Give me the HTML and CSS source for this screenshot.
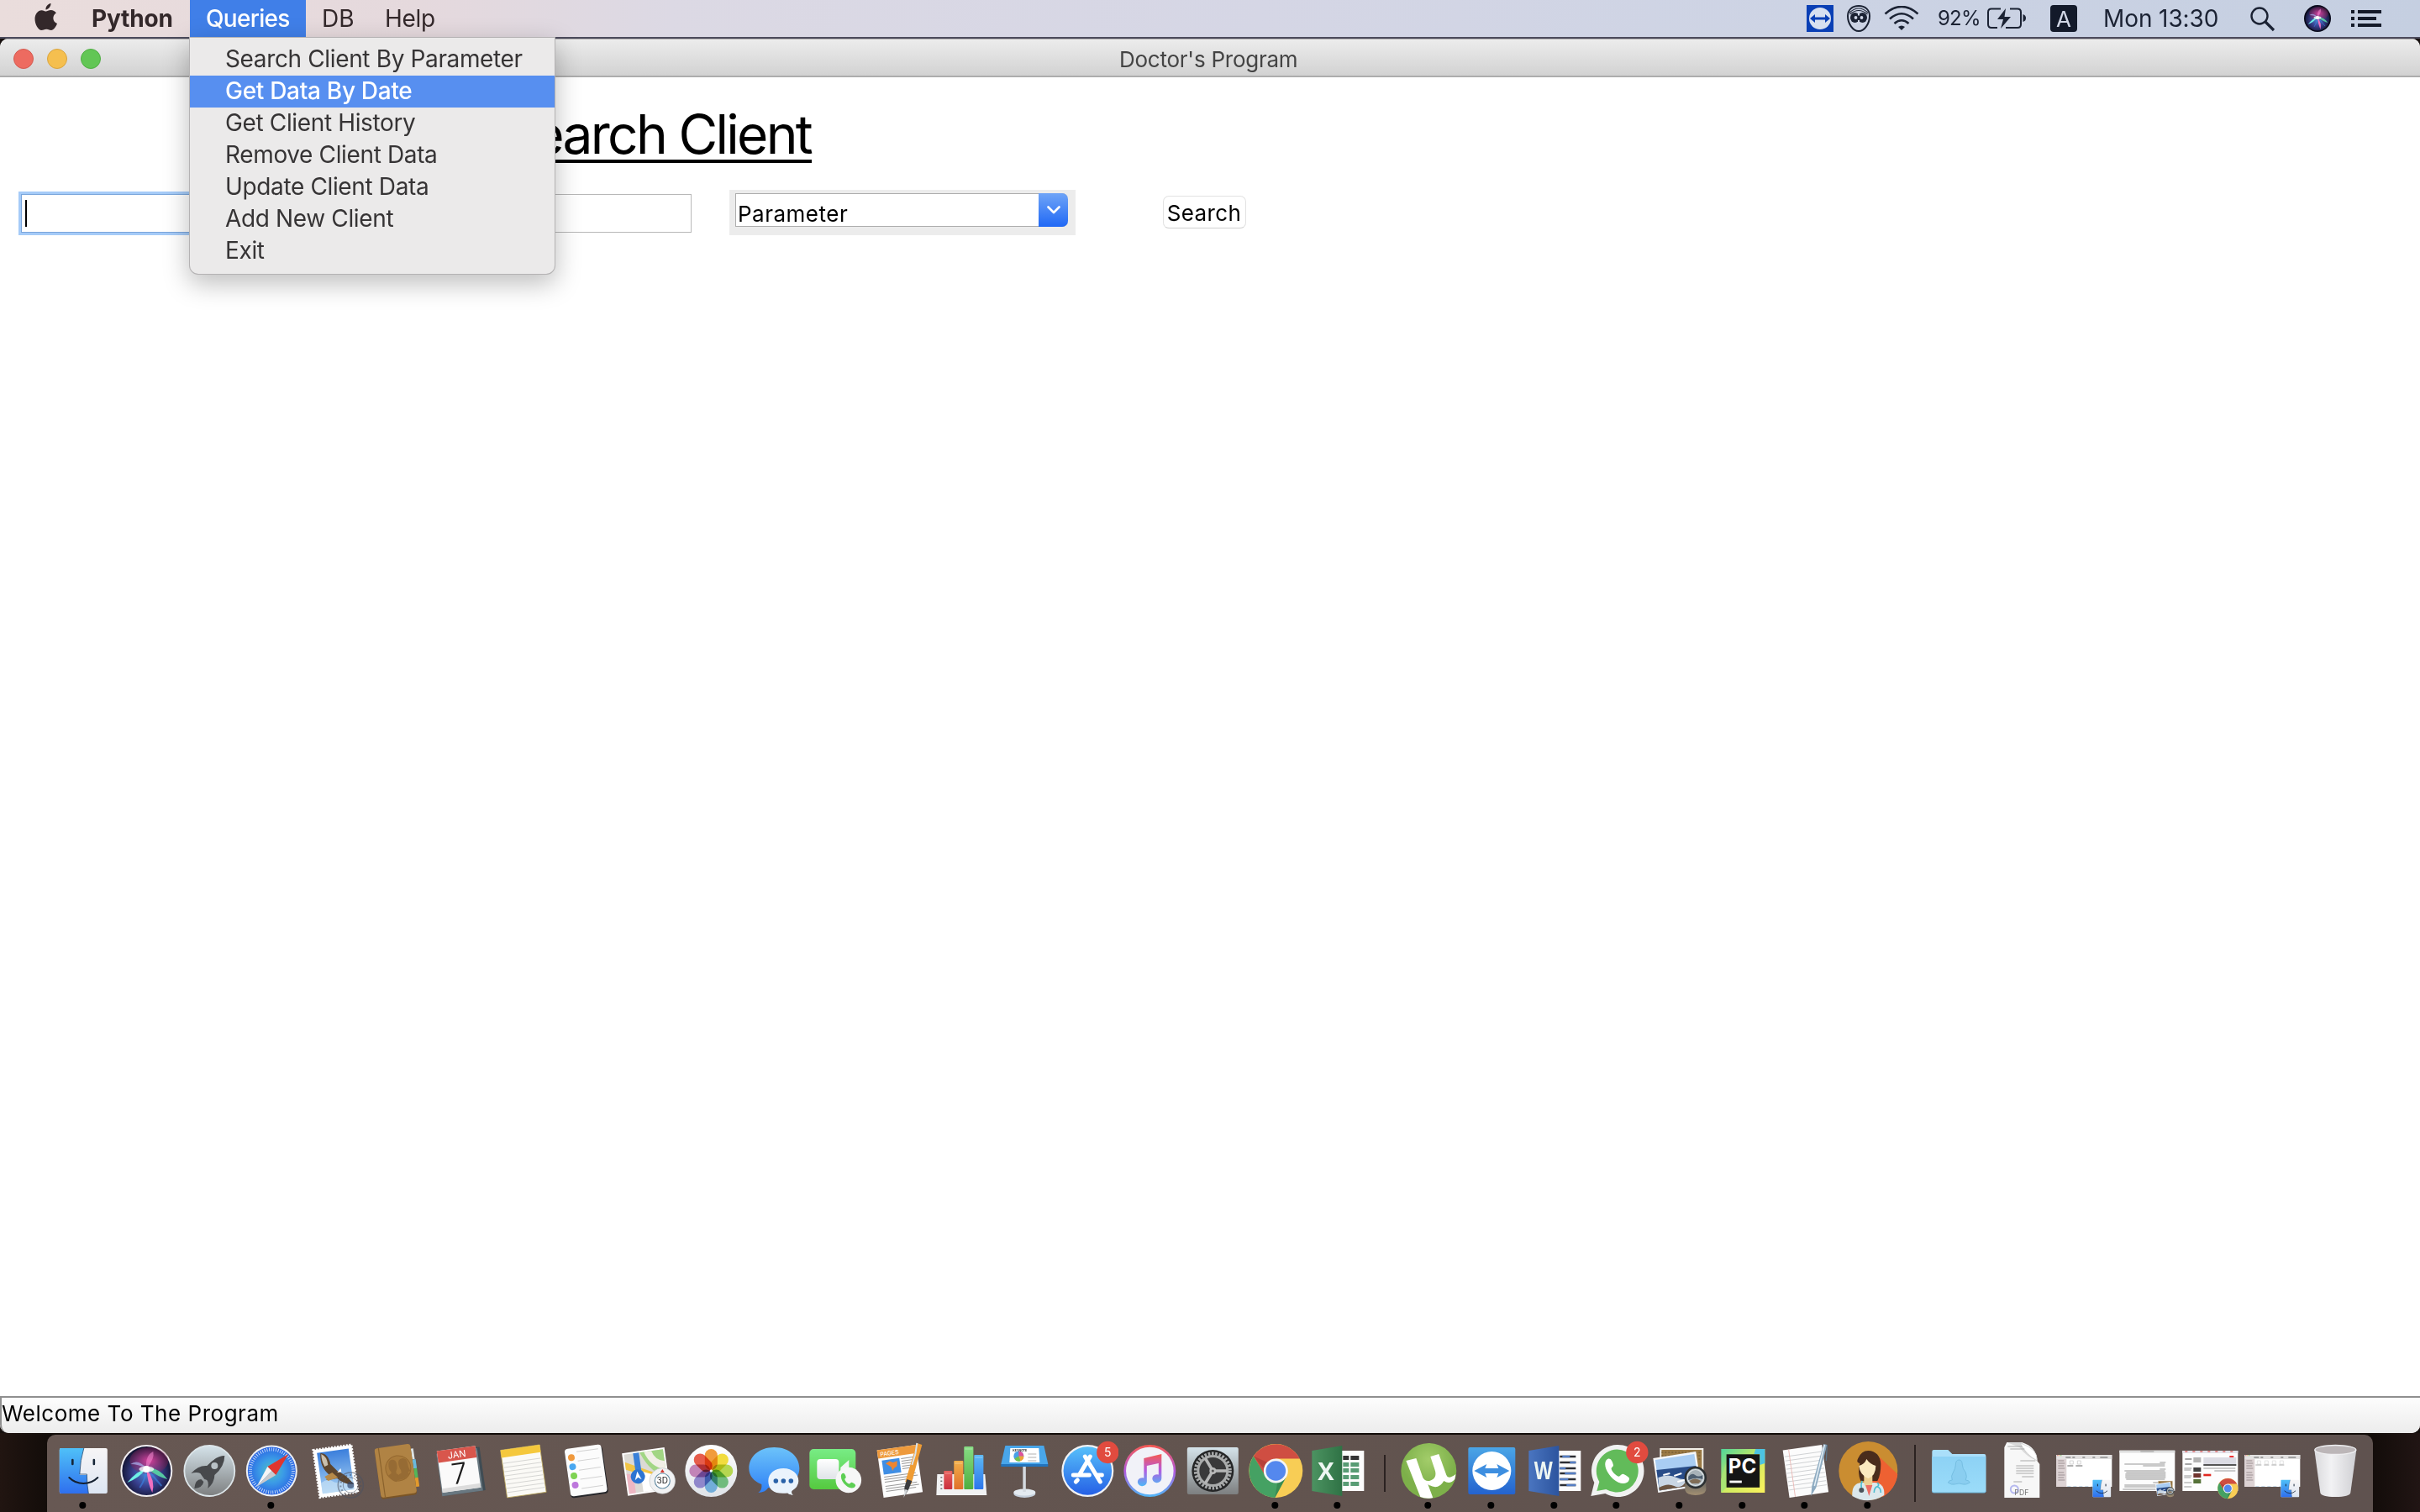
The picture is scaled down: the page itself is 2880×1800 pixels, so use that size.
FILE: index.html
```html
<!DOCTYPE html>
<html lang="en">
<head>
<meta charset="utf-8">
<title>Doctor's Program</title>
<link rel="stylesheet" href="styles.css">
</head>
<body>
<svg class="defs" width="0" height="0" aria-hidden="true">
  <defs>
    <linearGradient id="gBlueV" x2="0" y2="1"><stop stop-color="#4fc0f8"/><stop offset="1" stop-color="#2f6fee"/></linearGradient>
    <linearGradient id="gFace" x2="0" y2="1"><stop stop-color="#f7f5f6"/><stop offset="1" stop-color="#dde6f3"/></linearGradient>
    <linearGradient id="gSilver" x2="0" y2="1"><stop stop-color="#d5e3ea"/><stop offset="1" stop-color="#7d7f80"/></linearGradient>
    <linearGradient id="gWhite" x2="0" y2="1"><stop stop-color="#fff"/><stop offset="1" stop-color="#dfe3e8"/></linearGradient>
    <linearGradient id="gSky" x2="0" y2="1"><stop stop-color="#3b7fdc"/><stop offset="1" stop-color="#a9d2f4"/></linearGradient>
    <linearGradient id="gMsg" x2="0" y2="1"><stop stop-color="#6cc3fa"/><stop offset="1" stop-color="#2f80f6"/></linearGradient>
    <linearGradient id="gGreen" x2="0" y2="1"><stop stop-color="#78ec85"/><stop offset="1" stop-color="#55c93f"/></linearGradient>
    <linearGradient id="gStore" x2="0" y2="1"><stop stop-color="#57c0fa"/><stop offset="1" stop-color="#2560e6"/></linearGradient>
    <linearGradient id="gTunes" x2="0" y2="1"><stop stop-color="#f65a50"/><stop offset=".5" stop-color="#b45be0"/><stop offset="1" stop-color="#4fb7f7"/></linearGradient>
    <linearGradient id="gTv" x2="0" y2="1"><stop stop-color="#4aa5e6"/><stop offset="1" stop-color="#2463cf"/></linearGradient>
    <linearGradient id="gRed" x2="0" y2="1"><stop stop-color="#e8615d"/><stop offset="1" stop-color="#c92f3e"/></linearGradient>
    <linearGradient id="gOrange" x2="0" y2="1"><stop stop-color="#f3b04a"/><stop offset="1" stop-color="#e0702a"/></linearGradient>
    <linearGradient id="gBarG" x2="0" y2="1"><stop stop-color="#86dd84"/><stop offset="1" stop-color="#4fae3f"/></linearGradient>
    <linearGradient id="gBarB" x2="0" y2="1"><stop stop-color="#5db9f4"/><stop offset="1" stop-color="#2c76ec"/></linearGradient>
    <linearGradient id="gFolder" x2="0" y2="1"><stop stop-color="#8dd2f5"/><stop offset="1" stop-color="#9bdcf9"/></linearGradient>
    <linearGradient id="gTrash"><stop stop-color="#d9d9dc"/><stop offset=".4" stop-color="#f2f2f4"/><stop offset="1" stop-color="#cfcfd3"/></linearGradient>
    <linearGradient id="gXl"><stop stop-color="#4c9361"/><stop offset="1" stop-color="#2f7245"/></linearGradient>
    <linearGradient id="gWd"><stop stop-color="#4a75c0"/><stop offset="1" stop-color="#2c549e"/></linearGradient>
    <linearGradient id="gPyc" x2="1" y2="1"><stop stop-color="#4fd69a"/><stop offset=".5" stop-color="#cdea62"/><stop offset="1" stop-color="#fcf25c"/></linearGradient>
    <linearGradient id="gLens" x2="0" y2="1"><stop stop-color="#565a5c"/><stop offset="1" stop-color="#a38f72"/></linearGradient>
    <radialGradient id="gSafari"><stop stop-color="#4fc3c0"/><stop offset=".5" stop-color="#3b9be6"/><stop offset="1" stop-color="#2b66e4"/></radialGradient>
    <radialGradient id="gUt" cy=".3"><stop stop-color="#a3cd6a"/><stop offset="1" stop-color="#7db04a"/></radialGradient>
    <radialGradient id="gSiri" cx=".5" cy=".55" r=".55"><stop stop-color="#4a8ad8"/><stop offset=".5" stop-color="#38408e"/><stop offset="1" stop-color="#10102c"/></radialGradient>
    <radialGradient id="gPink" cx=".5" cy=".5" r=".5"><stop stop-color="#e0409c" stop-opacity=".95"/><stop offset="1" stop-color="#8a2050" stop-opacity=".35"/></radialGradient>
    <g id="finder">
      <rect x="-28.500" y="-27" width="57" height="54" rx="2" fill="url(#gFace)"/>
      <path d="M.500-27H-26.500q-2 0-2 2V25q0 2 2 2H6Q4 16 4 5H-4.500Q-4-13 .500-27Z" fill="url(#gBlueV)"/>
      <path d="M.500-27Q-4-13-4.500 4H4Q4 16 6 27" fill="none" stroke="#23486f" stroke-width=".8"/>
      <path d="M-13-13v5M12.500-13v5" stroke="#162638" stroke-width="2.600" stroke-linecap="round"/>
      <path d="M-17 8Q-10 15 0 15T17 8" fill="none" stroke="#142030" stroke-width="2" stroke-linecap="round"/>
    </g>
    <g id="siri">
      <circle r="29" fill="url(#gSiri)"/>
      <ellipse cx="3" cy="-12" rx="23" ry="16" fill="url(#gPink)"/>
      <path d="M0-3Q-9 9-23 14Q-11 0 0-3Z" fill="#6ef0e6"/>
      <path d="M0-3Q14-5 25 10Q15 8 0-3Z" fill="#56c8a2"/>
      <path d="M0-3Q11 12 7 26Q1 14 0-3Z" fill="#f070c0"/>
      <path d="M0-3Q-10-15-19-8Q-10-8 0-3Z" fill="#a8b4f0" opacity=".7"/>
      <path d="M0-3Q-2-18 8-23Q10-14 0-3Z" fill="#ee84cc" opacity=".6"/>
      <path d="M-8 20Q-1 10 0-3Q6 4 18 18" fill="none" stroke="#3a86e8" stroke-width="2" opacity=".6"/>
      <ellipse cy="-2" rx="9" ry="3.500" fill="#fff" opacity=".75"/>
      <circle cy="-2" r="4" fill="#fff"/>
    </g>
    <g id="chrome">
      <circle r="32" fill="#f8cd55"/>
      <path d="M-26.500-17.500A32 32 0 0 1 28.500-14.500H0L-12 8Z" fill="#cf4e42"/>
      <path d="M-26.500-17.500A32 32 0 0 0-1 32L12 8L-12 7Z" fill="#45a163"/>
      <path d="M-26.500-17.500L-13-1L-10-10Z" fill="#8a2c28" opacity=".35"/>
      <path d="M-1 32L12 8L2 13Z" fill="#256b3b" opacity=".4"/>
      <circle r="14.500" fill="#f5f5f5"/><circle r="11.800" fill="#5488ee"/>
    </g>
    <g id="preview">
      <path d="M-24-27H28V12H-24Z" fill="#f2efe8"/><path d="M-22-25H26V12H-22Z" fill="#9b7a45"/>
      <path d="M-22-22H26M-22-18H26M-22-14H26" stroke="#67502c" stroke-width="1" stroke-dasharray="2 2"/>
      <path d="M-32-15L19-23L25 18L-26 26Z" fill="#f6f7f8"/>
      <path d="M-29.500-13L17-20L22.500 16L-24.500 23.500Z" fill="#a9cdf3"/>
      <path d="M-28-1L19-6L22.500 16L-24.500 23.500Z" fill="#284c88"/>
      <path d="M-26 8Q-14 3-4 8T21 5L22.500 16L-24.500 23.500Z" fill="#c9d6e4"/>
      <path d="M-25 20Q-15 14-7 18T7 13L10 18L-24.500 23.500Z" fill="#6c5542"/>
      <path d="M-20 5l8-2m5 3l9-3M-3 13l12-3" stroke="#fff" stroke-width="2"/>
      <path d="M6 8V23Q8 29 18.500 29T31 23V8Z" fill="url(#gLens)"/>
      <circle cx="18.500" cy="8" r="12" fill="#a7b2b8" stroke="#2c3032" stroke-width="2.500"/>
      <circle cx="18.500" cy="8" r="9.500" fill="none" stroke="#dde3e5" stroke-width="1.200"/>
      <path d="M10 7q4-5 8-2t9 0v5q-8-3-17 1Z" fill="#4e5f70"/><path d="M11 12q7-5 14 0l-3 3h-8Z" fill="#806d56"/>
    </g>
    <g id="finderwin">
      <rect x="-33" y="-19" width="66" height="38" fill="#fff"/>
      <rect x="-33" y="-19" width="66" height="5" fill="#e3e1e1"/><rect x="-33" y="-14" width="12" height="33" fill="#ddd3d4"/>
      <path d="M-31-12h7m-7 3h8m-8 3h7m-7 3h8m-8 5h7m-7 3h8m-8 3h7m-7 3h8" stroke="#9b8f91" stroke-width="1"/>
      <path d="M-22-16h6m2 0h3m9 0h3m9 0h3m6 0h9" stroke="#8d8d8d" stroke-width="1.500"/>
      <path d="M-32-18.300h1" stroke="#e05048"/><path d="M-30-18.300h1" stroke="#dfae3a"/><path d="M-28-18.300h1" stroke="#4db848"/>
      <path d="M-20 18.500h30" stroke="#c9dceb" stroke-width="1" stroke-dasharray="4 3"/>
    </g>
    <g id="handset"><path d="M-8.500-8.500C-11-5-8 2-3 6.500S8 11 9.500 7.500C10.500 5.500 9 4.500 5 2.500 3.500 2 2.500 4.500 1.500 4.500-1 4-4.500 0-4.500-2-4-3-2.500-3.500-3-5-4-9-6-11-8.500-8.500Z"/></g>
  </defs>
</svg>

<header class="menubar">
  <nav class="menus">
    <svg class="apple" viewBox="0 0 28 33" width="28" height="33"><path d="M19.500 0c.3 3-2.300 7.200-6 7.500C13 4 16 .600 19.500 0ZM13.800 9.600c1.300 0 3-1.500 5.800-1.500 2.500 0 4.900 1.300 6.300 3.500-5.300 3.100-4.400 10.500 1.100 12.500C25.500 28.300 22.700 32 20 32c-2.200 0-2.900-1.300-5.700-1.300S10.500 32 8.500 32C4.300 32 .500 24.600.500 18.500.500 12.500 4.300 8.200 8.500 8.200c2.400 0 4 1.400 5.300 1.400Z" fill="#33282a"/></svg>
    <span class="menu app-name">Python</span>
    <span class="menu active">Queries</span>
    <span class="menu db">DB</span>
    <span class="menu help">Help</span>
  </nav>
  <div class="tray">
    <svg class="t-tv" width="32" height="32" viewBox="0 0 32 32"><path fill="#0a3fb5" d="M0 0h32v32H0z"/><circle cx="16" cy="16" r="13" fill="#d8e0f0"/><path d="M4 16l6-5v3.500h12V11l6 5-6 5v-3.500H10V21Z" fill="#0a3fb5"/></svg>
    <svg class="t-mask" width="28" height="32" viewBox="0 0 28 32"><path d="M14 1C6 1 1 6 1 13c0 9 6 18 13 18s13-9 13-18C27 6 22 1 14 1Z" fill="none" stroke="#1b2233" stroke-width="2"/><path d="M3 9Q14-1 25 9M3.500 11Q14 2 24.500 11" fill="none" stroke="#1b2233" stroke-width="1.100"/><ellipse cx="9.500" cy="15" rx="5.500" ry="6" fill="#1b2233"/><ellipse cx="18.500" cy="15" rx="5.500" ry="6" fill="#1b2233"/><path d="M12 10h4v10h-4Z" fill="#1b2233"/><circle cx="10.500" cy="15" r="1.900" fill="#d0d6e6"/><circle cx="17.500" cy="15" r="1.900" fill="#d0d6e6"/><path d="M14 8.500v4M14 18v4" stroke="#d0d6e6" stroke-width="2"/></svg>
    <svg class="t-wifi" width="42" height="30" viewBox="0 0 42 30"><g fill="none" stroke="#1b2233" stroke-width="2.600"><path d="M1.500 9.500Q21-7.500 40.500 9.500M7 15.500Q21 3 35 15.500M12.500 21Q21 13.500 29.500 21"/></g><path d="M17 25Q21 22 25 25L21 29Z" fill="#1b2233"/></svg>
    <span class="t-pct">92%</span>
    <svg class="t-batt" width="48" height="26" viewBox="0 0 48 26"><path d="M16 1.500H5Q1 1.500 1 5.500V20Q1 24 5 24H12M27 1.500H36Q40 1.500 40 5.500V20Q40 24 36 24H22" fill="none" stroke="#1b2233" stroke-width="2"/><path d="M22 1L12 14h7L16 25 28 11H20.500Z" fill="#1b2233"/><path d="M42.500 8Q46 9 46 12.500T42.500 17Z" fill="#1b2233"/></svg>
    <span class="t-lang">A</span>
    <span class="t-clock">Mon 13:30</span>
    <svg class="t-search" width="30" height="30" viewBox="0 0 30 30"><circle cx="11" cy="11" r="9.500" fill="none" stroke="#1b2233" stroke-width="2.400"/><path d="M18 18L28 28" stroke="#1b2233" stroke-width="3.200"/></svg>
    <svg class="t-siri" width="32" height="32" viewBox="-30 -30 60 60"><circle r="30" fill="#070818"/><use href="#siri" transform="scale(.93)"/></svg>
    <svg class="t-list" width="36" height="20" viewBox="0 0 36 20"><path d="M0 2h4M0 10h4M0 18h4M8 2h28M8 10h22M8 18h28" stroke="#141a29" stroke-width="4"/></svg>
  </div>
</header>

<ul class="dropdown">
  <li>Search Client By Parameter</li>
  <li class="selected">Get Data By Date</li>
  <li>Get Client History</li>
  <li>Remove Client Data</li>
  <li>Update Client Data</li>
  <li>Add New Client</li>
  <li>Exit</li>
</ul>

<main class="window">
  <div class="titlebar">
    <div class="lights"><i class="close"></i><i class="min"></i><i class="max"></i></div>
    <span class="title">Doctor's Program</span>
  </div>
  <section class="content">
    <h1>Search Client</h1>
    <div class="form">
      <div class="entry focused"><i class="caret"></i></div>
      <div class="entry"></div>
      <div class="combo-wrap"><div class="combo"><span>Parameter</span><b><svg width="16" height="10" viewBox="0 0 16 10"><path d="M1.500 1.500L8 8l6.500-6.500" fill="none" stroke="#fff" stroke-width="2.600" stroke-linecap="round" stroke-linejoin="round"/></svg></b></div></div>
      <div class="button">Search</div>
    </div>
  </section>
  <div class="status">Welcome To The Program</div>
</main>

<footer class="desktop">
  <div class="dock">
    <svg class="app" viewBox="-37.330 -43 74.670 92"><use href="#finder"/><circle cx="-1" cy="41" r="4"/></svg>
    <svg class="app" viewBox="-37.330 -43 74.670 92"><circle r="31" fill="#f2eff2"/><use href="#siri"/></svg>
    <svg class="app" viewBox="-37.330 -43 74.670 92"><circle r="30" fill="url(#gSilver)" stroke="#dce5e9" stroke-width="1.800"/><path d="M18-18Q8-18-3-6Q-13-7-22 3Q-15 1-11 3L-6 10Q0 10-2 21Q6 14 6 5Q18-5 18-18Z" fill="#47494c"/><circle cx="6" cy="-6" r="4" fill="#b8c1c6"/><path d="M-10 10Q-17 10-18 21Q-8 20-7 13Z" fill="#47494c"/></svg>
    <svg class="app" viewBox="-37.330 -43 74.670 92"><circle r="30.500" fill="#eff1f4"/><circle r="28.500" fill="url(#gSafari)"/><circle r="25.500" fill="none" stroke="#e6f2ff" stroke-width="4" stroke-dasharray=".9 1.800" opacity=".85"/><path d="M20-20L5 5L-5-5Z" fill="#e0362e"/><path d="M-18 19L-5-5L0 0Z" fill="#f5f5f5"/><path d="M-18 19L0 0L5 5Z" fill="#c9c9cc"/><circle cx="-1" cy="41" r="4"/></svg>
    <svg class="app" viewBox="-37.330 -43 74.670 92"><g transform="rotate(-8)"><rect x="-22" y="-28" width="46" height="57" fill="#fff" stroke="#fff" stroke-width="2.500" stroke-dasharray="2 1.600"/><rect x="-18" y="-24" width="38" height="49" fill="url(#gSky)"/><path d="M-18 12q8-5 14 0t12-1 12 2V25H-18Z" fill="#c4dff5" opacity=".7"/></g><path d="M-17-21Q-8-21-5-8L3 0Q13 4 23 16Q12 17 3 9L-10 11L-6 5Q-18-4-17-21Z" fill="#5c452f"/><path d="M-16-20Q-9-17-8-7L-12-5Q-16-12-16-20Z" fill="#c9bfae"/><path d="M-12 7L-3 2L4 8L-8 12Z" fill="#b78a4a"/><path d="M3 2L7-3L8 1Z" fill="#fff"/><g fill="none" stroke="#4b5262" opacity=".55"><circle cx="19" cy="17" r="15" stroke-width="1.600"/><circle cx="19" cy="17" r="9"/><circle cx="19" cy="17" r="12" stroke-width="2" stroke-dasharray="2 3"/></g><circle cx="19" cy="17" r="4" fill="#35496d" opacity=".7"/></svg>
    <svg class="app" viewBox="-37.330 -43 74.670 92"><g transform="rotate(-8)"><rect x="16" y="-24" width="6" height="13" fill="#dce2e4"/><rect x="16" y="-11" width="7" height="11" fill="#6ab9dc"/><rect x="16" y="0" width="7" height="11" fill="#54b559"/><rect x="16" y="11" width="7" height="11" fill="#e39a2c"/><rect x="-24" y="-29" width="43" height="60" rx="3" fill="#7b5526"/><rect x="-24" y="-30" width="43" height="59" rx="3" fill="#b08344"/><path d="M-19-30v59" stroke="#8a622c" stroke-width="1.200"/><circle cx="1" cy="-3" r="15" fill="#a97b3c" stroke="#94682f"/><g fill="#966b34"><path d="M-10-7q0-7 5-7t5 7q0 5-2 7v3q2 1 3 3l-4 7Q-9 11-12 4l4-2V0q-2-2-2-7Z"/><path d="M2-8q0-6 5-6 6 0 6 7 0 6 2 9l-3 1 1 2Q8 12-2 11q0-6 6-8V0q-2-3-2-8Z"/></g></g></svg>
    <svg class="app" viewBox="-37.330 -43 74.670 92"><g transform="rotate(-8)"><rect x="-24" y="-25" width="51" height="52" fill="#3f4c54"/><rect x="-25" y="-24" width="49" height="51" fill="#697881"/><rect x="-24" y="-27" width="46" height="50" fill="#fafafa"/><path d="M-24-27h46v14h-46Z" fill="#d8564c"/><path d="M-24 18h46v5h-46Z" fill="#dcdcdc"/><text x="-1" y="-16" text-anchor="middle" class="cal-month">JAN</text><text x="-1" y="15" text-anchor="middle" class="cal-day">7</text></g></svg>
    <svg class="app" viewBox="-37.330 -43 74.670 92"><g transform="rotate(-8)"><rect x="-23" y="-28" width="47" height="57" fill="#fbfaf6" stroke="#b8a45a" stroke-width=".8"/><path d="M-23-28h47v9h-47Z" fill="#f5c83c"/><path d="M-22-12h45m-45 5h45m-45 5h45m-45 5h45m-45 5h45m-45 5h45m-45 5h45m-45 5h45" stroke="#cfcfcc" stroke-width=".8"/></g></svg>
    <svg class="app" viewBox="-37.330 -43 74.670 92"><g transform="rotate(-8)"><rect x="-22" y="-27" width="45" height="57" rx="4" fill="#25262a"/><rect x="-22" y="-29" width="44" height="57" rx="4" fill="#fcfcfc"/><circle cx="-15" cy="-18" r="4" fill="#f09a3e"/><circle cx="-15" cy="-7" r="4" fill="#4aa8f0"/><circle cx="-15" cy="4" r="4" fill="#7fd353"/><circle cx="-15" cy="15" r="4" fill="#bd77dc"/><path d="M-8-24h26m-26 11h26m-26 11h26m-26 11h26m-26 11h26" stroke="#d2d2d2"/></g></svg>
    <svg class="app" viewBox="-37.330 -43 74.670 92"><g transform="rotate(-8)"><rect x="-28" y="-25" width="51" height="51" fill="#fff"/><rect x="-26" y="-23" width="47" height="47" fill="#dcdad5"/><path d="M-7-23H21V8Q4 6-7-23Z" fill="#a2d684"/><path d="M-2-23Q4-3 21 1V-9Q10-11 7-23Z" fill="#f1efe6"/><path d="M-26-14L5 2L21 10V17L-26-5Z" fill="#f2c545"/><path d="M-26 0L-18 2V24H-26Z" fill="#eeb7c3"/><path d="M-9-1L5 5V24H-9Z" fill="#fff"/><path d="M-15-23h7V6h-7Z" fill="#3a80d8"/><circle cx="-13" cy="5" r="8.500" fill="#2d74d2"/><path d="M-13-1l4 10-4-3-4 3Z" fill="#fff"/></g><circle cx="17" cy="12" r="15.300" fill="#f1f2f3" stroke="#bfc2c4" stroke-width=".6"/><circle cx="17" cy="12" r="9" fill="#fff" stroke="#688fa6" stroke-width="1.200"/><path d="M17-2l2.500 4h-5Z" fill="#d4362f"/><text x="17" y="15.500" text-anchor="middle" class="map-3d">3D</text></svg>
    <svg class="app photos" viewBox="-37.330 -43 74.670 92"><circle r="31" fill="url(#gWhite)"/><g><rect x="-7.500" y="-26" width="15" height="25" rx="7.500" fill="#f19c3b"/><rect x="-7.500" y="-26" width="15" height="25" rx="7.500" fill="#f2dc3e" transform="rotate(45)"/><rect x="-7.500" y="-26" width="15" height="25" rx="7.500" fill="#b5d750" transform="rotate(90)"/><rect x="-7.500" y="-26" width="15" height="25" rx="7.500" fill="#70bb7d" transform="rotate(135)"/><rect x="-7.500" y="-26" width="15" height="25" rx="7.500" fill="#72add9" transform="rotate(180)"/><rect x="-7.500" y="-26" width="15" height="25" rx="7.500" fill="#8f87cb" transform="rotate(225)"/><rect x="-7.500" y="-26" width="15" height="25" rx="7.500" fill="#c284b7" transform="rotate(270)"/><rect x="-7.500" y="-26" width="15" height="25" rx="7.500" fill="#e65c4b" transform="rotate(315)"/></g><circle r="1.500" fill="#fff"/></svg>
    <svg class="app" viewBox="-37.330 -43 74.670 92"><path d="M0-28C18-28 30-17 30-3S17 21 2 21Q-3 21-7 20Q-11 26-19 26Q-14 23-15 16Q-30 10-30-3C-30-17-18-28 0-28Z" fill="url(#gMsg)"/><path d="M11-3C22-3 29 4 29 12Q29 19 21 24Q20 27 23 29Q17 28 16 26.500Q-7 29-7 12C-7 3 1-3 11-3Z" fill="#eaf3fc"/><g fill="#2a62a8"><circle cx="2" cy="12" r="2.800"/><circle cx="11" cy="12" r="2.800"/><circle cx="20" cy="12" r="2.800"/></g></svg>
    <svg class="app" viewBox="-37.330 -43 74.670 92"><rect x="-32" y="-26" width="55" height="48" rx="5" fill="url(#gGreen)"/><rect x="-23" y="-14" width="26" height="24" rx="4" fill="url(#gWhite)"/><path d="M5-4L15-13V10L5 3Z" fill="#f2f6f3"/><circle cx="14.500" cy="11" r="15.300" fill="#f6f7f7"/><use href="#handset" transform="translate(14 11.500) scale(.9)" fill="#5dcf54"/></svg>
    <svg class="app" viewBox="-37.330 -43 74.670 92"><g transform="rotate(-8)"><rect x="-23" y="-28" width="47" height="57" fill="#fdfdfd"/><path d="M-23-28h47v10h-47Z" fill="#ee9a3c"/><text x="-20" y="-20" class="pages-t">PAGES</text><path d="M-19-15h21v17h-21Z" fill="#3f8ee4"/><path d="M-8-1l-1-5-6-5 5-2 4 2 5-1-1 6-4 2Z" fill="#ee8530"/><path d="M4-14h16M4-11h14M4-8h16M4-5h15M4-2h16M-19 5h38m-38 3h40m-40 3h34m-34 5h38m-38 3h40m-40 3h36" stroke="#999" stroke-width="1"/></g><path d="M21-33L27-31L14 16L7 13Z" fill="#ef9c34"/><path d="M21-33L19-20L15-7" fill="none" stroke="#d8e2ea" stroke-width="2"/><path d="M9 10L15 12L11 22L7 29L6 20Z" fill="#3b3c3f"/><path d="M7 22l3 1-5 9Z" fill="#d2d6da"/></svg>
    <svg class="app" viewBox="-37.330 -43 74.670 92"><path d="M-29 4H28L30 29H-30Z" fill="#f1f2f3"/><path d="M-24 7v18" stroke="#777" stroke-width="2" stroke-dasharray="1.500 3"/><rect x="-21" y="0" width="10" height="22" rx="1" fill="url(#gRed)"/><rect x="-9" y="-12" width="11" height="34" rx="1" fill="url(#gOrange)"/><rect x="3" y="-29" width="11" height="51" rx="1" fill="url(#gBarG)"/><rect x="15" y="-19" width="11" height="41" rx="1" fill="url(#gBarB)"/><path d="M-20 3h8M-8-9h9M4-26h9M16-16h9" stroke="#fff" opacity=".35"/></svg>
    <svg class="app" viewBox="-37.330 -43 74.670 92"><ellipse cy="27" rx="13" ry="5" fill="#c5d0dc"/><ellipse cy="25.500" rx="13" ry="4" fill="#e4ebf1"/><path d="M-2-6h3.500v31h-3.500Z" fill="#d4dae0"/><path d="M-23-30H23L28-8H-28Z" fill="#49a6ea"/><path d="M-28-8H28V-5H-28Z" fill="#2274bd"/><path d="M-17-27H17L18-10H-18Z" fill="#fff"/><circle cx="-7" cy="-17.500" r="6" fill="#49a0e6"/><path d="M-7-17.500v-6a6 6 0 0 1 6 6Z" fill="#e0529a"/><path d="M-7-17.500h6a6 6 0 0 1-4 6Z" fill="#f0a33a"/><path d="M-7-17.500l2 6a6 6 0 0 1-7-3Z" fill="#74c14d"/><path d="M4-20h10M4-16h10M4-12h10" stroke="#ccc" stroke-width="1.500"/><text x="-14" y="-23.500" class="key-t">KEYNOTE</text></svg>
    <svg class="app" viewBox="-37.330 -43 74.670 92"><circle r="31" fill="#f1f2f4"/><circle r="28.800" fill="url(#gStore)"/><g stroke="#fff" stroke-width="5" stroke-linecap="round"><path d="M3-17L-10 5M-3-17L15 13M-17 5H2M11 5H17M-12 11L-14 13"/></g><circle cx="24" cy="-22" r="13.200" fill="#e14b3f"/><text x="24" y="-17" text-anchor="middle" class="badge">5</text></svg>
    <svg class="app" viewBox="-37.330 -43 74.670 92"><circle r="31" fill="url(#gTunes)"/><circle r="28.300" fill="#f1f2f8"/><path d="M-7-15L14-20V9A5.500 5 0 1 1 10.500 4.500V-9L-3.500-6V13A5.500 5 0 1 1-7 8.500Z" fill="url(#gTunes)"/></svg>
    <svg class="app" viewBox="-37.330 -43 74.670 92"><rect x="-30.500" y="-28" width="61" height="56" rx="2" fill="url(#gSilver)"/><circle r="25" fill="#252627"/><circle r="20.500" fill="none" stroke="#a7a9aa" stroke-width="4" stroke-dasharray="2.600 1.700"/><circle r="17.500" fill="#39393a" stroke="#a9abab" stroke-width="3"/><path d="M0 0H17M0 0L-9-15M0 0L-9 15" stroke="#b5b6b6" stroke-width="3.500"/><circle r="4" fill="#b9baba"/><circle r="1.600" fill="#555"/></svg>
    <svg class="app" viewBox="-37.330 -43 74.670 92"><use href="#chrome"/><circle cx="-1" cy="41" r="4"/></svg>
    <svg class="app" viewBox="-37.330 -43 74.670 92"><path d="M4-24H31V24H4Z" fill="#fcfcfc"/><path d="M6-18h7v5H6Zm9 0h10v5H15Z" fill="#333"/><path d="M6-10h7v5H6Zm9 0h10v5H15ZM6-3h7v5H6Zm9 0h10v5H15ZM6 5h7v5H6Zm9 0h10v5H15ZM6 13h7v5H6Zm9 0h10v5H15Z" fill="#589c74"/><path d="M-31-24L5-30V30L-31 24Z" fill="url(#gXl)"/><text x="-14.500" y="11" text-anchor="middle" class="office">X</text><circle cx="-1" cy="41" r="4"/></svg>
    <i class="sep short"></i>
    <svg class="app" viewBox="-37.330 -43 74.670 92"><circle r="33" fill="url(#gUt)"/><path d="M-27-12L-15-15L-7 8Q-3 15 5 10Q10 6 7-2L2-17L12-20L21 5Q23 11 32 4L31 10Q25 17 18 12Q11 24-1 16L5 32Q-3 34-10 31Z" fill="#fff"/><circle cx="-1" cy="41" r="4"/></svg>
    <svg class="app" viewBox="-37.330 -43 74.670 92"><rect x="-28" y="-28" width="56" height="56" rx="2" fill="url(#gTv)"/><circle r="23" fill="#fff"/><path d="M-21 0L-6-8L-8-3H8L6-8L21 0L6 8L8 3H-8L-6 8Z" fill="#3d8ee0"/><circle cx="-1" cy="41" r="4"/></svg>
    <svg class="app" viewBox="-37.330 -43 74.670 92"><path d="M4-24H31V24H4Z" fill="#fcfcfc"/><path d="M6-17H25M6-10H25M6-3H25M6 3H25M6 10H25M6 17H25" stroke="#2c2e33" stroke-width="2.400"/><path d="M9-17h9M18-10h7M6-3h7M12 3h13M6 10h10M14 17h11" stroke="#557ec4" stroke-width="2.400"/><path d="M-31-24L5-30V30L-31 24Z" fill="url(#gWd)"/><text x="-13.500" y="10" text-anchor="middle" textLength="22" lengthAdjust="spacingAndGlyphs" class="office">W</text><circle cx="-1" cy="41" r="4"/></svg>
    <svg class="app" viewBox="-37.330 -43 74.670 92"><path d="M0-31A31 31 0 1 1-14 27L-31 30L-27 14A31 31 0 0 1 0-31Z" fill="#f1f2f2"/><path d="M0-25.500A25.500 25.500 0 1 1-13 22L-24 24L-21 13A25.500 25.500 0 0 1 0-25.500Z" fill="#62bb5a"/><use href="#handset" transform="scale(1.500)" fill="#fff"/><circle cx="24" cy="-22" r="13.200" fill="#e14b3f"/><text x="24" y="-17" text-anchor="middle" class="badge">2</text><circle cx="-1" cy="41" r="4"/></svg>
    <svg class="app" viewBox="-37.330 -43 74.670 92"><use href="#preview"/><circle cx="-1" cy="41" r="4"/></svg>
    <svg class="app" viewBox="-37.330 -43 74.670 92"><rect x="-26" y="-26" width="52" height="52" fill="url(#gPyc)"/><path d="M15-26H26V-9L20-7V-20H13Z" fill="#4cc3e2"/><path d="M-26 10L-20-10V20L-26 26Z" fill="#a9e474"/><rect x="-19.700" y="-19.700" width="39.500" height="39.500" fill="#151515"/><text x="-17.500" y="3" class="pc">PC</text><path d="M-16 13H-1.500" stroke="#fff" stroke-width="2.800"/><circle cx="-1" cy="41" r="4"/></svg>
    <svg class="app" viewBox="-37.330 -43 74.670 92"><g transform="rotate(-8)"><rect x="-23" y="-28" width="47" height="57" fill="#fcfcfc"/><path d="M-22-20h45m-45 5h45m-45 5h45m-45 5h45m-45 5h45m-45 5h45m-45 5h45m-45 5h45m-45 5h45" stroke="#c8cacc" stroke-width=".8"/><path d="M-16-28v57" stroke="#eab4b0" stroke-width=".8"/></g><path d="M22-32L26-31L13 20L7 30L8 18Z" fill="#8eabc1"/><path d="M23-31L11 18" stroke="#e4eef5" stroke-width="1.500"/><path d="M26-31L25-12" stroke="#59768c" stroke-width="1.200"/><circle cx="-1" cy="41" r="4"/></svg>
    <svg class="app" viewBox="-37.330 -43 74.670 92"><circle r="35" fill="#ca8d31"/><path d="M14-16L35 4A35 35 0 0 1 17 31L-4 10Z" fill="#ee6132"/><path d="M0-24C9-24 15-17 15-8Q15 5 11 12H-9Q-13 3-10-9Q-15-10-12-15Q-8-24 0-24Z" fill="#4a2c1c"/><path d="M-19 30Q-20 15-8 14H8Q20 15 19 29Q0 41-19 30Z" fill="#dbe8ec"/><path d="M-5 6H5V15L1 28L-5 15Z" fill="#edcf91"/><path d="M-3 17H5L1 30Z" fill="#ee6b63"/><path d="M-11-6Q-4-8-2-14Q2-8 9-6Q9 6 0 9Q-10 5-11-6Z" fill="#fbe9c0"/><circle cx="-8" cy="23" r="3" fill="#4b5359"/><path d="M-8 20Q-9 15-7 12M11 14Q14 18 10 19Q7 21 7 26M11 19Q15 20 15 26" fill="none" stroke="#4dbcd0" stroke-width="1.600"/><circle cx="-1" cy="41" r="4"/></svg>
    <i class="sep"></i>
    <svg class="app" viewBox="-37.330 -43 74.670 92"><path d="M-32-23q0-2 2-2h17l5 5H30q2 0 2 2V24q0 2-2 2H-30q-2 0-2-2Z" fill="#aadffa"/><path d="M-32-17H32V24q0 2-2 2H-30q-2 0-2-2Z" fill="url(#gFolder)"/><path d="M-32 24q0 2 2 2H30q2 0 2-2" fill="none" stroke="#6eb4d8"/><path d="M0-13q4 0 4 6 0 4 4 9 2 5 0 9 4 0 5 3-5 3-8 2-5-2-10 0-4 1-8-2 1-3 5-3-2-5 1-9 3-5 3-9 0-6 4-6Z" fill="#8acef0" stroke="#70b9dd" stroke-width=".8"/></svg>
    <svg class="app" viewBox="-37.330 -43 74.670 92"><path d="M-18-34H0Q18-28 18-12L21-8V32H-21V-28Z" fill="#f7f7f7"/><path d="M-18-34H0L18-12Q6-16-3-28Z" fill="#d9d9d9"/><path d="M-2-33Q4-20 18-12Q19-26-2-33Z" fill="#fff" stroke="#c4c4c4" stroke-width=".6"/><path d="M-17-29H0m-14 3H3M-2-12H16M-7-6h21M-7-3h21M-7 0h21M-7 3h21M0 7h14M-10 13H0" stroke="#aaa" stroke-width="1"/><circle cx="-9" cy="22" r="4.500" fill="none" stroke="#b6b9ef" stroke-width="2"/><text x="-9" y="29.500" textLength="17" lengthAdjust="spacingAndGlyphs" class="pdf">PDF</text></svg>
    <svg class="app" viewBox="-37.330 -43 74.670 92"><use href="#finderwin"/><path d="M-17-12h4v4h-4Zm9 0h4v4h-4Z" fill="none" stroke="#ccc" stroke-width=".8"/><path d="M-20-6h7m3 0h8" stroke="#999" stroke-width="1.300"/><use href="#finder" transform="translate(21 21) scale(.38)"/></svg>
    <svg class="app" viewBox="-37.330 -43 74.670 92"><rect x="-33" y="-24" width="66" height="48" fill="#fdfdfd"/><path d="M-33-23H33" stroke="#ddd" stroke-width="3"/><path d="M-8-23H8" stroke="#999"/><path d="M15-10h7M-27-8h48M-5-6h26M15-2h7M-27 0h48m-46 2h47m-48 2h48m-48 2h48m-48 2h48m-47 2h46m-14 4h15M-27 17h40m-40 2h38m-40 3h39" stroke="#969696" stroke-width="1"/><use href="#preview" transform="translate(21 21) scale(.35)"/></svg>
    <svg class="app" viewBox="-37.330 -43 74.670 92"><rect x="-33" y="-24" width="66" height="48" fill="#fdfdfd"/><path d="M-33-22.500H33" stroke="#e1e1e8" stroke-width="3"/><path d="M-30-23H30" stroke="#de6d6b" stroke-width="1.500" stroke-dasharray="3 6"/><path d="M-8-16h39v10h-39Z" fill="#dcdce4"/><path d="M-8-7h39" stroke="#555" stroke-width="2"/><path d="M23-17h5" stroke="#e33" stroke-width="2"/><path d="M-30-14h8m-8 6h8" stroke="#888" stroke-width="1.500"/><path d="M-20-16h9v6h-9Z" fill="#b5b5b5"/><path d="M-20-4h9v5h-9Z" fill="#444"/><path d="M-20 3h9v5h-9Z" fill="#70352f"/><path d="M-20 10h9v5h-9Z" fill="#557138"/><path d="M-31-3h9m-9 2h8m-8 7h9m-9 2h8m-8 6h9m-9 5h9M-8-3h38M5 0h25" stroke="#999"/><path d="M-8 5h9" stroke="#e02820" stroke-width="2.600"/><use href="#chrome" transform="translate(21 21) scale(.38)"/></svg>
    <svg class="app" viewBox="-37.330 -43 74.670 92"><use href="#finderwin"/><path d="M-18-12h4v4h-4Zm9 0h4v4h-4Zm9 0h4v4H0Zm9 0h4v4H9Z" fill="none" stroke="#ddd" stroke-width=".8"/><path d="M-20-7h7m3 0h6m3 0h6m3 0h6" stroke="#aaa"/><use href="#finder" transform="translate(21 21) scale(.38)"/></svg>
    <svg class="app" viewBox="-37.330 -43 74.670 92"><path d="M-25-25L-18 26Q-17 31 0 31T18 26L25-25Z" fill="url(#gTrash)"/><ellipse cy="-25" rx="24.500" ry="5.500" fill="#bcb6b8" stroke="#efeff1" stroke-width="1.400"/></svg>
  </div>
</footer>
</body>
</html>
```
FILE: styles.css
```css
* { box-sizing: border-box; }
body {
  margin: 0;
  width: 2880px;
  height: 1800px;
  overflow: hidden;
  position: relative;
  display: flex;
  flex-direction: column;
  background: #17100e;
  font-family: Inter, "Liberation Sans", sans-serif;
  color: #000;
}
.defs { position: absolute; }

/* menu bar */
.menubar {
  height: 46px;
  flex: none;
  display: flex;
  justify-content: space-between;
  border-bottom: 2px solid #4c4b5c;
  background: linear-gradient(90deg, #eadddc 0, #e5d9dd 500px, #dcd9e4 800px, #d5d6e5 1500px, #ccd3e4 2200px, #c5cfe1 100%);
  font-size: 28px;
  line-height: 44px;
}
.menus, .tray { display: flex; align-items: flex-start; height: 44px; }
.menu { white-space: nowrap; color: #33282a; }
.apple { margin: 4px 0 0 41px; }
.app-name { width: 117px; margin-left: 40px; font-weight: 700; letter-spacing: -.2px; }
.menu.active { width: 138px; padding-left: 19px; background: #407fe8; color: #fff; font-weight: 500; letter-spacing: -.7px; }
.db { width: 76px; padding-left: 19px; }
.help { padding-left: 18px; letter-spacing: -.3px; }
.tray { width: 730px; color: #1b2233; white-space: nowrap; }
.t-tv { margin-top: 6px; }
.t-mask { margin: 6px 0 0 16px; }
.t-wifi { margin: 7px 0 0 16px; }
.t-pct { width: 57px; margin-left: 22px; font-size: 24px; line-height: 43px; letter-spacing: -.8px; }
.t-batt { margin: 9px 0 0 2px; }
.t-lang { width: 32px; height: 32px; margin: 6px 0 0 27px; border-radius: 4px; background: #131a2a; color: #d2d8e7; font-size: 26px; line-height: 33px; text-align: center; }
.t-clock { width: 142px; margin-left: 31px; letter-spacing: -.1px; }
.t-search { margin: 8px 0 0 33px; }
.t-siri { margin: 6px 0 0 34px; }
.t-list { margin: 12px 0 0 24px; }

/* open menu */
.dropdown {
  position: absolute;
  z-index: 2;
  left: 226px;
  top: 45px;
  width: 434px;
  height: 281px;
  margin: 0;
  padding: 7px 0 0;
  list-style: none;
  background: #ebeaea;
  border-radius: 0 0 10px 10px;
  box-shadow: 0 0 0 1px #b4b2b3, 0 10px 30px 2px rgba(0, 0, 0, .25);
  font-size: 28px;
  color: #363435;
}
.dropdown li { height: 38px; padding-left: 42px; line-height: 37px; letter-spacing: -.36px; white-space: nowrap; }
.dropdown .selected { padding-top: 0; background: #578ff0; color: #fff; font-weight: 500; letter-spacing: -.3px; }

/* application window */
.window {
  height: 1660px;
  flex: none;
  display: flex;
  flex-direction: column;
  overflow: hidden;
  background: #fff;
  border-radius: 10px;
}
.titlebar {
  height: 46px;
  flex: none;
  display: flex;
  align-items: center;
  border-top: 1px solid #b4b2b2;
  border-bottom: 2px solid #adadad;
  background: linear-gradient(#ececec, #d2d2d2);
}
.lights { display: flex; gap: 16px; width: 1332px; padding-left: 16px; }
.lights i { width: 24px; height: 24px; margin-top: 2px; border-radius: 50%; border-width: 1px; border-style: solid; }
.close { background: #ed6b60; border-color: #d45a50; }
.min { background: #f5bf4f; border-color: #d9a43e; }
.max { background: #62c655; border-color: #4fae43; }
.title { padding-top: 4px; font-size: 26px; letter-spacing: -.25px; color: #444; white-space: nowrap; }
.content { flex: 1; display: flex; flex-direction: column; align-items: flex-start; }
h1 {
  width: 406px;
  height: 80px;
  margin: 22px 0 0 560px;
  padding-right: 1px;
  border-bottom: 4px solid #000;
  font-size: 64px;
  line-height: 92px;
  font-weight: 400;
  letter-spacing: -2.700px;
  text-align: right;
  white-space: nowrap;
}
.form { display: flex; align-items: flex-start; height: 54px; margin-top: 32px; padding-left: 25px; }
.entry { width: 395px; height: 46px; margin-top: 5px; border: 1px solid #b8b8b8; background: #fff; }
.entry + .entry { margin-left: 8px; }
.entry.focused { border-color: #7aa6dc; box-shadow: 0 0 0 3px #a5cbf8; padding: 6px 4px; }
.caret { display: block; width: 2px; height: 32px; background: #000; }
.combo-wrap { width: 412px; height: 54px; margin-left: 45px; padding: 4px 9px 0 7px; background: #ececec; }
.combo { display: flex; height: 40px; border: 1px solid #adadad; border-right: 0; border-radius: 0 7px 7px 0; background: #fff; font-size: 26px; letter-spacing: .5px; }
.combo span { flex: 1; padding-left: 2px; line-height: 48px; }
.combo b { width: 35px; margin: -1px 0; border-radius: 0 7px 7px 0; background: linear-gradient(#6fa4f7, #2068f5); display: flex; align-items: center; justify-content: center; }
.button { width: 99px; height: 39px; margin: 7px 0 0 104px; padding-right: 1px; border: 1px solid #e2e2e2; border-bottom-color: #cfcfcf; border-radius: 7px; font-size: 26px; line-height: 39px; text-align: center; letter-spacing: .4px; }
.status {
  height: 44px;
  flex: none;
  border: 2px solid #8f8f8f;
  border-width: 2px 0 0 2px;
  border-bottom-left-radius: 10px;
  background: linear-gradient(#fdfdfd, #ececec);
  font-size: 26px;
  line-height: 38px;
  letter-spacing: .52px;
  white-space: nowrap;
}

/* dock */
.desktop { flex: 1; padding: 2px 56px 0; background: linear-gradient(90deg, #211511, #120c09 60px, #120c09 2820px, #211514); }
.dock { height: 92px; display: flex; padding-left: 6.300px; border-radius: 10px 10px 0 0; background: linear-gradient(90deg, #675853, #62544f 50%, #5f524f); }
.app { width: 74.670px; height: 92px; flex: none; }
.sep { width: 2px; height: 68px; margin: 12px 14.300px 0 17px; background: #2b2221; }
.sep.short { height: 44px; margin-top: 24px; }
.photos g { isolation: isolate; }
.photos rect { mix-blend-mode: multiply; }
.cal-month { font-size: 11px; fill: #fff; }
.cal-day { font-size: 34px; font-weight: 300; fill: #1a1a1a; }
.map-3d { font-size: 10px; fill: #222; }
.pages-t { font-size: 7px; fill: #fff; }
.key-t { font-size: 3.500px; font-weight: 700; fill: #333; }
.badge { font-size: 14px; fill: #fff; }
.office { font-family: "Open Sans", sans-serif; font-size: 29px; font-weight: 700; fill: #eef6f2; }
.pc { font-size: 24px; font-weight: 700; fill: #fff; }
.pdf { font-size: 9px; fill: #777; }
```
